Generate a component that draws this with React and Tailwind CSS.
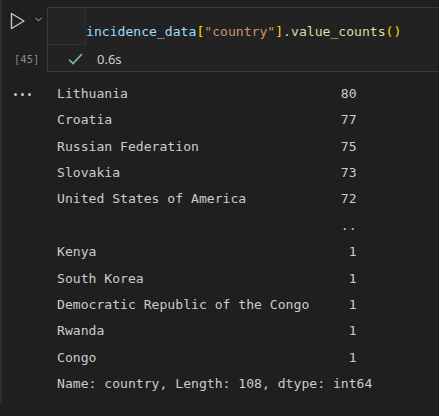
import { ChevronDown } from 'lucide-react';

const mono = { fontFamily: '"DejaVu Sans Mono", "Liberation Mono", monospace' };

const rows = [
  'Lithuania                           80',
  'Croatia                             77',
  'Russian Federation                  75',
  'Slovakia                            73',
  'United States of America            72',
  '                                    ..',
  'Kenya                                1',
  'South Korea                          1',
  'Democratic Republic of the Congo     1',
  'Rwanda                               1',
  'Congo                                1',
  'Name: country, Length: 108, dtype: int64',
];

const App = () => {
  return (
    <div className="relative h-[416px] w-[439px] overflow-hidden bg-[#1f1f1f] font-['Noto_Sans',sans-serif] text-[#cccccc]">
      {/* cell focus bar */}
      <div className="absolute left-0 top-0 h-[403px] w-[2px] bg-[#2e2e2e]" />

      {/* input row */}
      <div className="flex pt-[7px]">
        <div className="w-[47px] shrink-0">
          <div className="flex items-center pl-[10px] pt-[5px]">
            <svg width="16" height="18" viewBox="0 0 16 18" fill="none">
              <path d="M1.5 1.5 L14 9 L1.5 16.5 Z" stroke="#c5c5c5" strokeWidth="1.4" strokeLinejoin="round" />
            </svg>
            <ChevronDown className="ml-[7px] mt-[-3px] h-[11px] w-[11px] text-[#c5c5c5]" strokeWidth={2} />
          </div>
          <div className="mt-[22px] pl-[14px] text-[10.5px] text-[#8b8b8b]" style={mono}>
            [45]
          </div>
        </div>
        <div className="h-[65px] flex-1 border border-r-0 border-[#3a3a3a] bg-[#222222]">
          <div className="flex h-[37px]">
            <div className="w-[38px] shrink-0 border-b border-r border-[#303030] bg-[#242424]" />
            <pre className="pt-[14px] text-[13.1px] leading-[20px] text-[#9cdcfe]" style={mono}>
              incidence_data<span className="text-[#ffd700]">[</span>
              <span className="text-[#ce9178]">"country"</span>
              <span className="text-[#ffd700]">]</span>
              <span className="text-[#d4d4d4]">.</span>
              <span className="text-[#dcdcaa]">value_counts</span>
              <span className="text-[#ffd700]">()</span>
            </pre>
          </div>
          <div className="flex items-center pl-[20px] pt-[6px]">
            <svg width="15" height="12" viewBox="0 0 15 12" fill="none">
              <path d="M1 6.5 L5 10.5 L14 1" stroke="#73c991" strokeWidth="1.6" />
            </svg>
            <span className="ml-[14px] text-[13px] leading-[16px] text-[#cccccc]">0.6s</span>
          </div>
        </div>
      </div>

      {/* output */}
      <div className="flex pt-[9px]">
        <div className="w-[57px] shrink-0 pl-[14px]">
          <div className="flex h-[26.36px] items-center gap-[4px]">
            <span className="h-[3px] w-[3px] rounded-full bg-[#c5c5c5]" />
            <span className="h-[3px] w-[3px] rounded-full bg-[#c5c5c5]" />
            <span className="h-[3px] w-[3px] rounded-full bg-[#c5c5c5]" />
          </div>
        </div>
        <pre className="text-[13.1px] leading-[26.36px] text-[#cccccc]" style={mono}>
          {rows.join('\n')}
        </pre>
      </div>
    </div>
  );
};

export default App;
